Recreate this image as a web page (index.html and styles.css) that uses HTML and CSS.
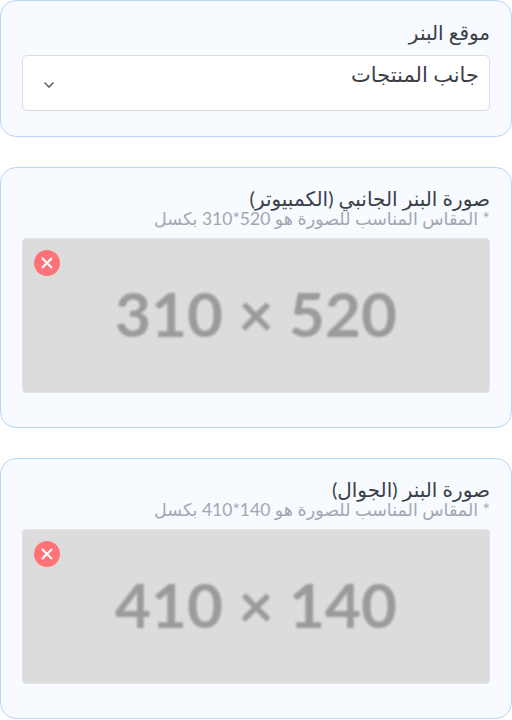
FILE: index.html
```html
<!DOCTYPE html>
<html lang="ar" dir="rtl">
<head>
    <meta charset="utf-8" />
    <title>Banner settings</title>
    <link rel="stylesheet" href="styles.css">
</head>
<body>
    <section class="card cardSelect">
        <p class="label">موقع البنر</p>
        <div class="select">
            <span class="selectText">جانب المنتجات</span>
            <svg class="chevron" width="12" height="8" viewBox="0 0 12 8">
                <path d="M1.5 1.5 L6 6 L10.5 1.5" fill="none" stroke="#5f6b7a" stroke-width="1.6"/>
            </svg>
        </div>
    </section>

    <section class="card">
        <p class="label">صورة البنر الجانبي (الكمبيوتر)</p>
        <p class="hint">* المقاس المناسب للصورة هو 520*310 بكسل</p>
        <div class="preview">
            <span class="previewText">310 × 520</span>
            <button class="removeBtn">
                <svg width="12" height="12" viewBox="0 0 12 12">
                    <path d="M1 1 L11 11 M11 1 L1 11" stroke="white" stroke-width="2"/>
                </svg>
            </button>
        </div>
    </section>

    <section class="card">
        <p class="label">صورة البنر (الجوال)</p>
        <p class="hint">* المقاس المناسب للصورة هو 140*410 بكسل</p>
        <div class="preview">
            <span class="previewText">410 × 140</span>
            <button class="removeBtn">
                <svg width="12" height="12" viewBox="0 0 12 12">
                    <path d="M1 1 L11 11 M11 1 L1 11" stroke="white" stroke-width="2"/>
                </svg>
            </button>
        </div>
    </section>
</body>
</html>
```

FILE: styles.css
```css
body {
    font-family: Lato, "DejaVu Sans", sans-serif;
    margin: 0;
    display: flex;
    flex-direction: column;
    gap: 30px;
}
p {
    margin: 0;
}
.card {
    box-sizing: border-box;
    height: 261px;
    padding: 20px 21px 0;
    background-color: #F7FAFF;
    border: 1px solid #B5D7F7;
    border-radius: 16px;
}
.cardSelect {
    height: 137px;
    padding-top: 21px;
}
.label {
    font-size: 20px;
    line-height: 20px;
    color: #3A4047;
}
.hint {
    font-size: 17.5px;
    line-height: 20px;
    margin-top: 1px;
    color: #A3A7B2;
}
.select {
    box-sizing: border-box;
    height: 56px;
    margin-top: 13px;
    padding: 4px 10px 0 20px;
    display: flex;
    justify-content: space-between;
    background-color: white;
    border: 1px solid #DDDDDD;
    border-radius: 5px;
}
.selectText {
    font-size: 21px;
    line-height: 28px;
    color: #3A4047;
}
.chevron {
    align-self: center;
}
.preview {
    box-sizing: border-box;
    position: relative;
    height: 155px;
    margin-top: 9px;
    display: flex;
    align-items: center;
    justify-content: center;
    background-color: #DCDCDC;
    border: 1px solid #E4E4E4;
    border-radius: 4px;
}
.previewText {
    direction: ltr;
    font-family: Lato, sans-serif;
    font-weight: 700;
    font-size: 62px;
    margin-bottom: 5px;
    color: #9B9B9B;
    filter: blur(0.8px);
}
.removeBtn {
    position: absolute;
    top: 11px;
    left: 11px;
    width: 26px;
    height: 26px;
    padding: 0;
    border: none;
    border-radius: 50%;
    background-color: #FF7378;
    display: flex;
    align-items: center;
    justify-content: center;
}
```
